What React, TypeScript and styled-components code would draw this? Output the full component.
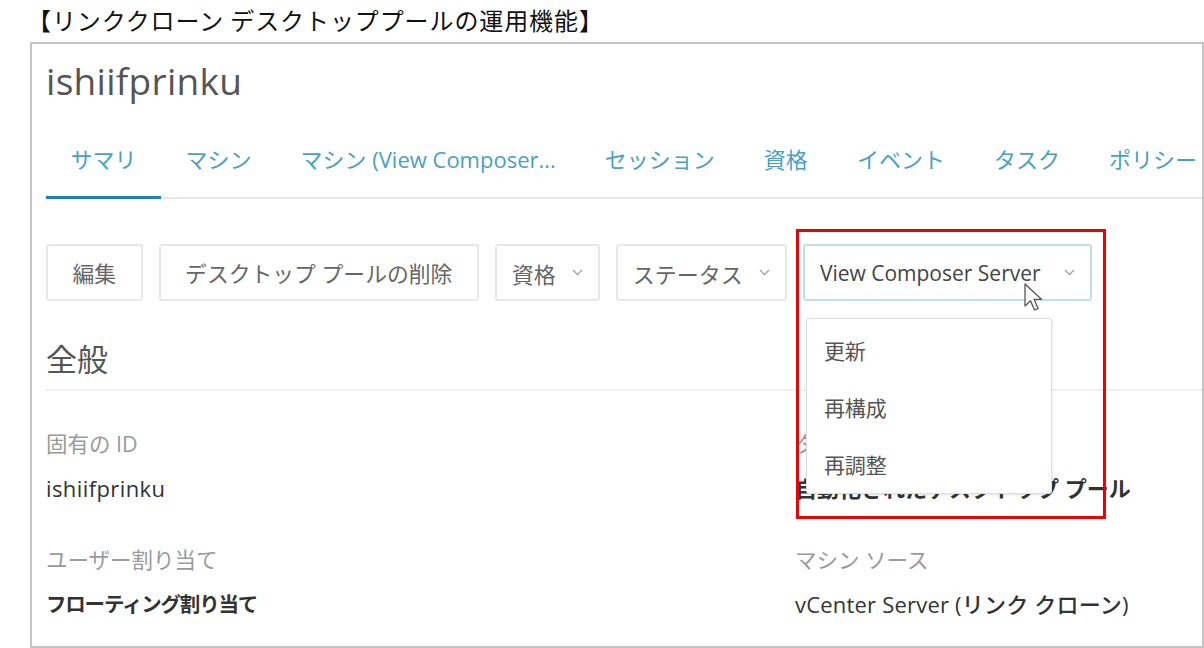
import styled, { createGlobalStyle } from "styled-components";

const GlobalStyle = createGlobalStyle`
  html, body {
    margin: 0;
    padding: 0;
    background: #ffffff;
  }
  body {
    font-family: "Open Sans", "Noto Sans CJK JP", sans-serif;
  }
`;

const tabs = [
  "サマリ",
  "マシン",
  "マシン (View Composer...",
  "セッション",
  "資格",
  "イベント",
  "タスク",
  "ポリシー",
];

const fields = [
  [
    { label: "固有の ID", value: "ishiifprinku", strong: false, size: 22, spacing: 0.4 },
    { label: "ユーザー割り当て", value: "フローティング割り当て", strong: true, size: 20.5, spacing: -1.2 },
  ],
  [
    { label: "タイプ", value: "自動化されたデスクトップ プール", strong: true, size: 22, spacing: 0 },
    { label: "マシン ソース", value: "vCenter Server (リンク クローン)", strong: false, size: 22, spacing: 0.2 },
  ],
];

const Chevron = () => (
  <svg width="11" height="7" viewBox="0 0 11 7" fill="none">
    <path d="M1 1l4.5 4.5L10 1" stroke="#a0a0a0" strokeWidth="1.3" />
  </svg>
);

const Cursor = () => (
  <svg width="20" height="30" viewBox="0 0 20 30">
    <path
      d="M1 1v22l5.5-5.2 4 9.2 3.6-1.6-4-9h7.6z"
      fill="#ffffff"
      stroke="#555"
      strokeWidth="1.3"
      strokeLinejoin="round"
    />
  </svg>
);

const App = () => {
  return (
    <Page>
      <GlobalStyle />
      <Caption>【リンククローン デスクトッププールの運用機能】</Caption>
      <Frame>
        <PoolTitle>ishiifprinku</PoolTitle>
        <TabBar>
          {tabs.map((t, i) => (
            <Tab key={t} $active={i === 0}>
              {t}
            </Tab>
          ))}
        </TabBar>

        <Toolbar>
          <ActionButton>編集</ActionButton>
          <ActionButton>デスクトップ プールの削除</ActionButton>
          <MenuButton>
            資格 <Chevron />
          </MenuButton>
          <MenuButton>
            ステータス <Chevron />
          </MenuButton>
          <SelectWrap>
            <MenuButton $open>
              View Composer Server <Chevron />
            </MenuButton>
            <Menu>
              <MenuItem>更新</MenuItem>
              <MenuItem>再構成</MenuItem>
              <MenuItem>再調整</MenuItem>
            </Menu>
            <PointerMark>
              <Cursor />
            </PointerMark>
            <Highlight />
          </SelectWrap>
        </Toolbar>

        <SectionTitle>全般</SectionTitle>

        <FieldGrid>
          {fields.map((col, ci) => (
            <FieldColumn key={ci}>
              {col.map((f) => (
                <Field key={f.label}>
                  <FieldLabel>{f.label}</FieldLabel>
                  <FieldValue $strong={f.strong} $size={f.size} $spacing={f.spacing}>
                    {f.value}
                  </FieldValue>
                </Field>
              ))}
            </FieldColumn>
          ))}
        </FieldGrid>
      </Frame>
    </Page>
  );
};

export default App;

const Page = styled.div`
  width: 1204px;
  height: 648px;
  overflow: hidden;
`;

const Caption = styled.div`
  padding: 5px 0 0 27px;
  height: 30px;
  line-height: 30px;
  font-family: "Noto Sans CJK JP", sans-serif;
  font-size: 24px;
  letter-spacing: 0.9px;
  color: #111;
`;

const Frame = styled.div`
  box-sizing: border-box;
  margin: 7px 0 0 30px;
  width: 1174px;
  height: 606px;
  border: 2px solid #c4c4c4;
  padding-left: 14px;
  overflow: hidden;
  position: relative;
`;

const PoolTitle = styled.div`
  margin-top: 15px;
  height: 44px;
  line-height: 44px;
  font-size: 37px;
  color: #555;
  letter-spacing: 0.3px;
`;

const TabBar = styled.div`
  display: flex;
  margin-top: 20px;
  border-bottom: 2px solid #e6e6e6;
  white-space: nowrap;
`;

const Tab = styled.div<{ $active?: boolean }>`
  display: flex;
  align-items: center;
  height: 70px;
  padding: 0 24.5px 3px;
  margin-bottom: -2px;
  border-bottom: 3px solid ${(p) => (p.$active ? "#1b7fc0" : "transparent")};
  font-size: 22px;
  color: #4a9fc4;
`;

const Toolbar = styled.div`
  display: flex;
  gap: 16px;
  margin-top: 45px;
`;

const ActionButton = styled.div`
  display: flex;
  align-items: center;
  box-sizing: border-box;
  height: 57px;
  padding: 0 24.5px;
  border: 2px solid #e8e8e8;
  border-radius: 3px;
  font-size: 21.8px;
  color: #666;
  white-space: nowrap;
`;

const MenuButton = styled(ActionButton)<{ $open?: boolean }>`
  gap: 16px;
  padding: 0 15px;
  border-color: ${(p) => (p.$open ? "#bfe0e6" : "#e8e8e8")};
  color: ${(p) => (p.$open ? "#444" : "#666")};
  font-size: ${(p) => (p.$open ? "21px" : "22px")};
`;

const SelectWrap = styled.div`
  position: relative;

  & > div:first-child {
    width: 289px;
    justify-content: space-between;
  }
`;

const Menu = styled.div`
  position: absolute;
  top: 74px;
  left: 3px;
  z-index: 2;
  box-sizing: border-box;
  width: 246px;
  height: 176px;
  padding-top: 4px;
  background: #fff;
  border: 1px solid #dedede;
  border-radius: 3px;
  box-shadow: 0 1px 3px rgba(0, 0, 0, 0.12);
`;

const MenuItem = styled.div`
  height: 57px;
  line-height: 57px;
  padding-left: 17px;
  font-size: 21px;
  color: #555;
`;

const PointerMark = styled.div`
  position: absolute;
  top: 39px;
  left: 221px;
  z-index: 3;
  line-height: 0;
`;

const Highlight = styled.div`
  position: absolute;
  box-sizing: border-box;
  top: -15px;
  left: -7px;
  z-index: 4;
  width: 310px;
  height: 290px;
  border: 3px solid #f00000;
  pointer-events: none;
`;

const SectionTitle = styled.div`
  margin: 38px 0 0;
  padding-bottom: 10px;
  height: 40px;
  line-height: 40px;
  font-size: 31px;
  color: #555;
  border-bottom: 2px solid #efefef;
`;

const FieldGrid = styled.div`
  display: grid;
  grid-template-columns: 749px 1fr;
  margin-top: 39px;
`;

const FieldColumn = styled.div`
  display: flex;
  flex-direction: column;
  gap: 44px;
`;

const Field = styled.div`
  display: flex;
  flex-direction: column;
  gap: 16px;
`;

const FieldLabel = styled.div`
  height: 28px;
  line-height: 28px;
  font-size: 21.5px;
  color: #9a9a9a;
`;

const FieldValue = styled.div<{ $strong?: boolean; $size: number; $spacing: number }>`
  height: 28px;
  line-height: 28px;
  font-size: ${(p) => p.$size}px;
  font-weight: ${(p) => (p.$strong ? 700 : 500)};
  color: #333;
  white-space: nowrap;
  letter-spacing: ${(p) => p.$spacing}px;
`;
